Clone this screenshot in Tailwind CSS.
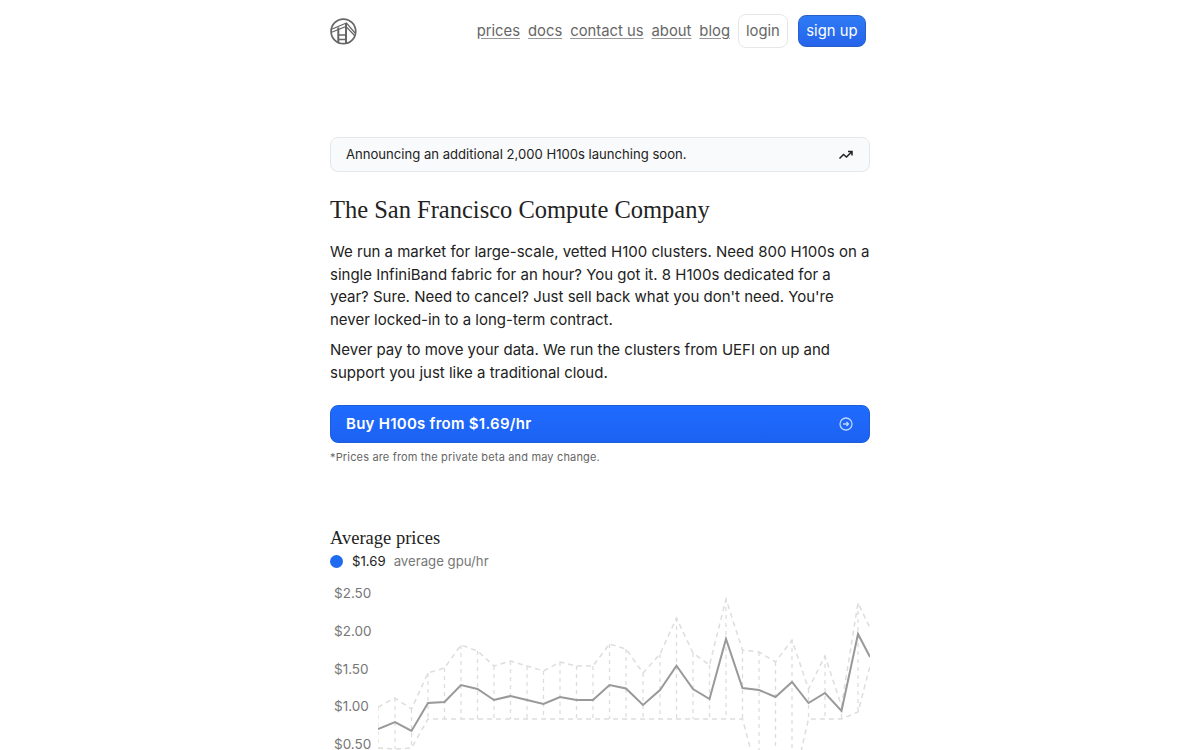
<!DOCTYPE html>
<html lang="en">
<head>
    <meta charset="UTF-8">
    <title>The San Francisco Compute Company</title>
    <script src="https://cdn.jsdelivr.net/npm/@tailwindcss/browser@4"></script>
</head>
<body class="bg-white font-['Inter',sans-serif] text-[#222]">
    <div class="h-[750px] overflow-hidden">
        <div class="w-[540px] ml-[330px]">
            <!-- Nav -->
            <nav class="flex items-center justify-between pt-[14px] pr-[4px] h-[48px]">
                <svg class="w-[27px] h-[27px] text-[#666]" viewBox="0 0 27 27" fill="none" stroke="currentColor">
                    <circle cx="13.4" cy="13.4" r="12.3" stroke-width="1.7"/>
                    <path d="M8.3 9.5V25M16 5V25.5" stroke-width="2"/>
                    <path d="M8.3 17h7.7M8.3 21.5h7.7" stroke-width="1.6"/>
                    <path d="M1 11.5 16.5 5 25 15M1 14.5 16 8.5 25 18" stroke-width="1.2"/>
                </svg>
                <div class="flex items-center text-[14.8px] text-[#666]">
                    <a class="underline decoration-[#999] underline-offset-2 mr-2">prices</a>
                    <a class="underline decoration-[#999] underline-offset-2 mr-2">docs</a>
                    <a class="underline decoration-[#999] underline-offset-2 mr-2">contact us</a>
                    <a class="underline decoration-[#999] underline-offset-2 mr-2">about</a>
                    <a class="underline decoration-[#999] underline-offset-2 mr-2">blog</a>
                    <a class="flex items-center h-[34px] px-[7px] border border-gray-200 rounded-lg mr-[10px]">login</a>
                    <a class="flex items-center h-[32px] px-[7.5px] text-white rounded-lg border border-[#2860c8] bg-gradient-to-b from-[#2f7bf6] to-[#2563eb]">sign up</a>
                </div>
            </nav>

            <!-- Banner -->
            <div class="mt-[89px] h-[35px] flex items-center justify-between px-[15px] bg-[#f9fafb] border border-gray-200 rounded-lg text-[13.1px]">
                <span>Announcing an additional 2,000 H100s launching soon.</span>
                <svg class="w-4 h-4" viewBox="0 0 16 16" fill="none" stroke="#222" stroke-width="1.5">
                    <path d="M1.5 11.5 5.5 7.5 8.5 10 14 4.5M10 4.5h4v4"/>
                </svg>
            </div>

            <h1 class="mt-[23px] text-[24.5px] leading-[30px] font-['Liberation_Serif',serif]">The San Francisco Compute Company</h1>

            <p class="mt-[16px] text-[15px] leading-[22.5px]">We run a market for large-scale, vetted H100 clusters. Need 800 H100s on a single InfiniBand fabric for an hour? You got it. 8 H100s dedicated for a year? Sure. Need to cancel? Just sell back what you don't need. You're never locked-in to a long-term contract.</p>
            <p class="mt-[8px] text-[15px] leading-[22.5px]">Never pay to move your data. We run the clusters from UEFI on up and support you just like a traditional cloud.</p>

            <!-- Buy button -->
            <a class="mt-[21px] h-[38px] flex items-center justify-between px-[15px] text-white font-semibold text-[15px] tracking-[0.26px] rounded-lg border border-[#1f5fd6] bg-gradient-to-b from-[#1f6bff] to-[#1c62f2]">
                <span>Buy H100s from $1.69/hr</span>
                <svg class="w-4 h-4 text-[#bcd4ff]" viewBox="0 0 16 16" fill="none" stroke="currentColor" stroke-width="1.3">
                    <circle cx="8" cy="8" r="6"/>
                    <path d="M5 8h5.5M8.5 6 10.5 8 8.5 10"/>
                </svg>
            </a>
            <p class="mt-[7px] text-[11px] leading-[14px] text-[#666] tracking-[0.16px]">*Prices are from the private beta and may change.</p>

            <!-- Chart -->
            <h2 class="mt-[62px] text-[18.5px] leading-[24px] font-['Liberation_Serif',serif]">Average prices</h2>
            <div class="mt-[1px] flex items-center text-[13.2px] leading-[20px]">
                <span class="w-[13px] h-[13px] rounded-full bg-[#1f6bef] mr-[9px]"></span>
                <span>$1.69</span>
                <span class="ml-2 text-[#777]">average gpu/hr</span>
            </div>
            <div class="mt-[12px] flex">
                <div class="w-[48px] shrink-0 pl-1 flex flex-col gap-[17.8px] text-[13.5px] leading-[20px] text-[#777]">
                    <span>$2.50</span>
                    <span>$2.00</span>
                    <span>$1.50</span>
                    <span>$1.00</span>
                    <span>$0.50</span>
                </div>
                <svg class="w-[492px] h-[167px] shrink-0" viewBox="378 582 492 167" fill="none">
                    <path stroke="#ddd" stroke-width="1.3" stroke-dasharray="4 4" d="M378 706V747M395 697V748M411.5 708V747M428 672V718M444.5 667V718M461 644V718M477.5 650V718M494 665V718M510.5 660V718M527 665V718M543.5 670V718M560 661V718M576.5 665V718M593 665V718M609.5 643V718M626 648V718M643 672V718M660 653V718M676.5 617V718M693 652V718M709.5 664V718M726 598V718M742.5 649V718M759 651V780M775.5 661V800M792 639V790M808.5 688V718M825 655V718M841.5 705V718M858 602V711"/>
                    <polyline stroke="#ddd" stroke-width="1.5" stroke-dasharray="5 4" points="378,706 395,697 411.5,708 428,672 444.5,667 461,644 477.5,650 494,665 510.5,660 527,665 543.5,670 560,661 576.5,665 593,665 609.5,643 626,648 643,672 660,653 676.5,617 693,652 709.5,664 726,598 742.5,649 759,651 775.5,661 792,639 808.5,688 825,655 841.5,705 858,602 870,627"/>
                    <polyline stroke="#ddd" stroke-width="1.5" stroke-dasharray="5 4" points="378,747 395,748 411.5,747 428,718 444.5,718 461,718 477.5,718 494,718 510.5,718 527,718 543.5,718 560,718 576.5,718 593,718 609.5,718 626,718 643,718 660,718 676.5,718 693,718 709.5,718 726,718 742.5,718 759,780 775.5,800 792,790 808.5,718 825,718 841.5,718 858,711 870,665"/>
                    <polyline stroke="#999" stroke-width="2" points="378,728 395,721 411.5,730 428,702 444.5,701 461,684 477.5,688 494,699 510.5,695 527,699 543.5,703 560,696 576.5,699 593,699 609.5,684 626,687.5 643,704 660,689 676.5,664.7 693,688 709.5,698 726,638 742.5,687 759,689 775.5,696 792,681 808.5,702 825,692 841.5,710 858,633 870,656"/>
                </svg>
            </div>
        </div>
    </div>
</body>
</html>
